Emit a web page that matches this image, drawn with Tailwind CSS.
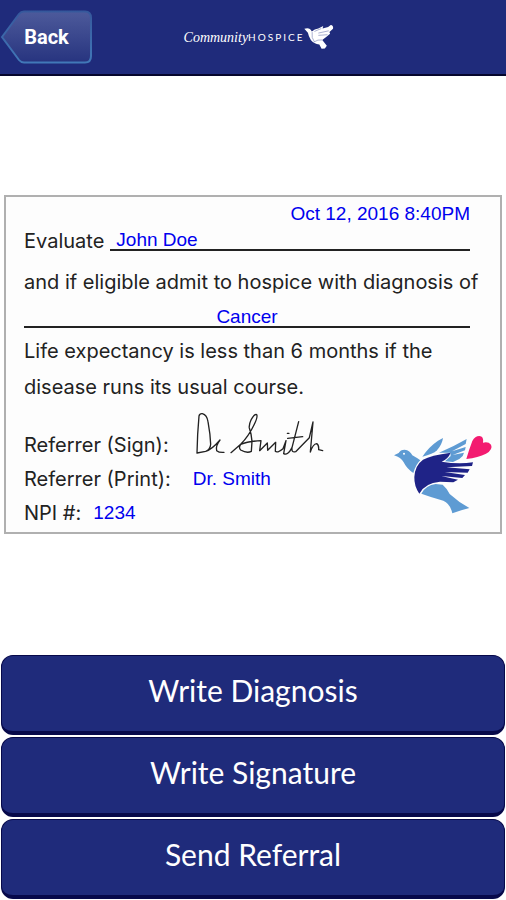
<!DOCTYPE html>
<html lang="en">
<head>
<meta charset="utf-8">
<meta name="viewport" content="width=device-width, initial-scale=1">
<title>Community Hospice Referral</title>
<script src="https://cdn.jsdelivr.net/npm/@tailwindcss/browser@4"></script>
</head>
<body class="flex min-h-screen flex-col bg-white font-['Inter',sans-serif]">

<header class="grid h-[76px] grid-cols-[1fr_auto_1fr] items-center border-b-2 border-[#05062c] bg-[#1f2b7b]">
  <button type="button" class="relative h-[54px] w-[93px] font-['Roboto',sans-serif] text-[20px] font-bold text-white">
    <svg class="absolute inset-0 h-full w-full" viewBox="0 0 93 54" aria-hidden="true">
      <defs>
        <linearGradient id="face" x1="0" y1="0" x2="0" y2="1">
          <stop offset="0" stop-color="#4d5a9b"/>
          <stop offset="1" stop-color="#27347f"/>
        </linearGradient>
        <linearGradient id="rim" x1="0" y1="0" x2="0" y2="1">
          <stop offset="0" stop-color="#36589c"/>
          <stop offset="1" stop-color="#4178b8"/>
        </linearGradient>
      </defs>
      <path d="M2 27 L19 4 Q21 1.500 24 1.500 H85 Q91 1.500 91 8 V46 Q91 52.500 85 52.500 H24 Q21 52.500 19 50 Z" fill="url(#face)" stroke="url(#rim)" stroke-width="2"/>
    </svg>
    <span class="relative">Back</span>
  </button>
  <div class="flex items-center pl-3 text-white">
    <span class="font-['Liberation_Serif',serif] text-[14px] italic">Community</span>
    <span class="font-['Lato',sans-serif] text-[10px] tracking-[2px]">HOSPICE</span>
    <svg class="h-[26px] w-[30px]" viewBox="408 28 92 78" aria-hidden="true">
      <path fill="#fff" d="M409 42 L418 40 Q427 40 432 50 Q440 42 452 41 L467 33 L465 41 L482 36 L490 30 Q499 31 497 42 L486 52 L488 57 L477 66 L464 76 L478 94 L472 102 L462 103 L455 90 Q438 88 429 76 Q422 65 420 54 Z"/>
      <path fill="none" stroke="#7f88b8" stroke-width="2" d="M433 52 Q430 70 440 82 M452 55 L484 48 M452 62 L480 60 M440 50 L461 41 M439 82 Q450 74 464 76"/>
    </svg>
  </div>
  <div></div>
</header>

<main class="flex flex-1 flex-col justify-center px-1 pb-[2px]">
  <section class="border-2 border-[#b0b0b0] bg-[#fdfdfd] pt-[7px] pr-[30px] pb-[2px] pl-[18px] text-[20px] leading-6 text-[#222]">
    <p class="text-right font-['Liberation_Sans',sans-serif] text-[19px] leading-5 text-[#0000ee]">Oct 12, 2016 8:40PM</p>
    <div class="mt-[5px] flex gap-[6px]">
      <span>Evaluate</span>
      <span class="h-[22px] flex-1 border-b-2 border-[#222] pl-[6px] font-['Liberation_Sans',sans-serif] text-[19px] leading-[22px] text-[#0000ee]">John Doe</span>
    </div>
    <p class="mt-[17px] whitespace-nowrap">and if eligible admit to hospice with diagnosis of</p>
    <p class="mt-3 h-[22px] border-b-2 border-[#222] text-center font-['Liberation_Sans',sans-serif] text-[19px] leading-[22px] text-[#0000ee]">Cancer</p>
    <p class="mt-[5px] leading-9">Life expectancy is less than 6 months if the<br>disease runs its usual course.</p>
    <div class="mt-[6px] -mr-[25px] flex justify-between">
      <div class="leading-[34px]">
        <div class="flex h-[51px] items-end gap-[26px]">
          <span>Referrer (Sign):</span>
          <svg class="h-[48px] w-[132px] self-start" viewBox="44 30 396 144" fill="none" stroke="#222" stroke-width="4" stroke-linecap="round" stroke-linejoin="round" role="img" aria-label="Signature of Dr. Smith">
            <path d="M56 45 L52 100 L50 156 M56 45 Q58 37 66 38 Q80 42 83 62 Q90 100 91 130 Q90 146 76 151 L50 156 M76 151 Q94 146 119 117 Q105 135 109 149 Q116 155 131 154"/>
            <path d="M152 155 L181 130 Q205 106 222 70 Q233 47 229 41 Q223 38 213 55 Q205 72 207 81 Q213 97 215 121 L213 151 Q200 158 181 147 Q174 140 181 130 M181 130 Q203 121 242 119 L238 149 L261 126 L262 148 L286 124 L285 151 Q291 157 308 143 L317 119 L310 158 Q322 165 335 140 L355 62 M335 140 Q333 156 346 152 L387 110 L398 63 L390 153 Q398 129 409 128 Q416 132 415 146 L427 149 M321 97 L326 97 M322 112 L367 107"/>
          </svg>
        </div>
        <div class="flex gap-[22px]">
          <span>Referrer (Print):</span>
          <span class="font-['Liberation_Sans',sans-serif] text-[19px] text-[#0000ee]">Dr. Smith</span>
        </div>
        <div class="flex gap-3">
          <span>NPI #:</span>
          <span class="font-['Liberation_Sans',sans-serif] text-[19px] text-[#0000ee]">1234</span>
        </div>
      </div>
      <svg class="mt-[22px] h-[82px] w-[102px] shrink-0" viewBox="25 25 306 246" aria-hidden="true">
        <g fill="#5e9bd3">
          <path d="M28 92 L42 85 Q47 75 60 75 Q76 77 83 92 Q94 98 107 107 Q94 118 86 145 Q66 132 57 113 Q49 98 28 92 Z"/>
          <path d="M113 96 Q132 67 160 48 L175 40 Q172 60 157 77 Q145 89 113 96 Z"/>
          <path d="M163 84 Q208 65 246 43 L243 58 L202 80 L243 67 L241 77 L204 91 L238 84 L234 94 L224 103 L205 112 L181 110 L198 94 L197 84 Z"/>
          <path d="M110 207 Q124 181 153 178 L174 180 Q186 190 195 208 Q221 232 254 250 L230 257 L203 266 Q196 236 176 228 Q140 218 110 207 Z"/>
        </g>
        <path fill="#1f2387" d="M104 207 Q88 184 89 157 Q91 122 115 105 Q138 92 198 84 Q190 103 171 111 Q220 119 265 113 L262 124 L185 128 L255 134 L249 144 L180 142 L241 151 L233 160 L170 154 L220 165 L206 173 L166 171 Q120 175 104 207 Z"/>
        <path fill="#f31b70" d="M245 103 Q253 75 263 49 Q271 34 284 34 Q298 35 295 54 Q311 50 319 60 Q326 74 304 87 Q281 99 245 103 Z"/>
        <circle cx="58" cy="87" r="3" fill="#fff"/>
      </svg>
    </div>
  </section>
</main>

<nav class="flex flex-col gap-[2px] px-[1px] font-['Lato',sans-serif] text-[30px] text-white" aria-label="Referral actions">
  <button type="button" class="h-[80px] rounded-[12px] border border-b-4 border-[#07094a] bg-[#1f2b7b] pb-[6px]">Write Diagnosis</button>
  <button type="button" class="h-[80px] rounded-[12px] border border-b-4 border-[#07094a] bg-[#1f2b7b] pb-[6px]">Write Signature</button>
  <button type="button" class="mb-[1px] h-[80px] rounded-[12px] border border-b-4 border-[#07094a] bg-[#1f2b7b] pb-[6px]">Send Referral</button>
</nav>

</body>
</html>
